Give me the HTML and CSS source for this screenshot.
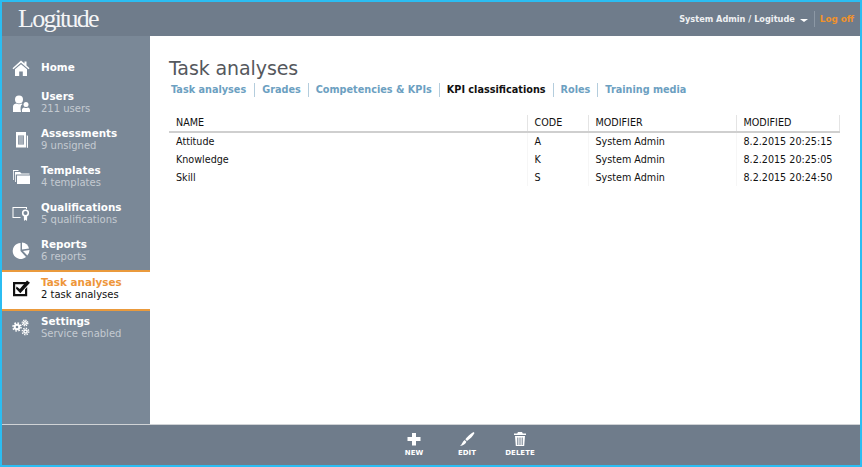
FILE: index.html
```html
<!DOCTYPE html>
<html lang="en">
<head>
<meta charset="utf-8">
<title>Task analyses - Logitude</title>
<link rel="stylesheet" href="styles.css">
</head>
<body>
<div class="app">
  <header class="topbar">
    <div class="logo">Logitude</div>
    <div class="user">
      <span class="user-name">System Admin / Logitude</span>
      <span class="caret"></span>
      <span class="logoff">Log off</span>
    </div>
  </header>
  <div class="middle">
    <nav class="sidebar">
      <a class="nav-item nav-home">
        <svg class="nav-icon" viewBox="0 0 20 20"><path d="M10 2.500 L13.500 5.600 V3.500 H15.500 V7.400 L18.500 10.200 L17.600 11.200 L10 4.700 L2.400 11.200 L1.500 10.200 Z M4 11.300 L10 6.200 L16 11.300 V18 H11.800 V13.500 H8.200 V18 H4 Z" fill="#fff"/></svg>
        <span class="nav-text"><b>Home</b></span>
      </a>
      <a class="nav-item">
        <svg class="nav-icon" viewBox="0 -2 20 20"><circle cx="8" cy="5.500" r="4" fill="#fff"/><path d="M2 18 V12.500 C2 10.500 4 9.800 5.500 9.500 C7 10.500 9 10.500 10.500 9.500 L11.500 10 C9.500 11.500 9 14 10 18 Z" fill="#fff"/><circle cx="15" cy="10.500" r="2.500" fill="#fff"/><path d="M11 18 C10.500 15 11.500 14 13 13.500 C14.300 14.300 15.700 14.300 17 13.500 C18.500 14 19.300 15 19 18 Z" fill="#fff"/></svg>
        <span class="nav-text"><b>Users</b><small>211 users</small></span>
      </a>
      <a class="nav-item">
        <svg class="nav-icon" viewBox="0 0 20 20"><path d="M5 3 H15 V18.500 H5 Z M7 6.500 V15.500 H13 V6.500 Z" fill="#fff" fill-rule="evenodd"/><path d="M7.500 7 H12.500 V15 H7.500 Z" fill="#fff" opacity=".35"/><path d="M15.800 6 L17 7 V19 L15.800 18.500 Z" fill="#fff"/></svg>
        <span class="nav-text"><b>Assessments</b><small>9 unsigned</small></span>
      </a>
      <a class="nav-item">
        <svg class="nav-icon" viewBox="0 0 20 20"><path d="M2 4 H7.500 V5 H2.800 V14 H2 Z" fill="#fff"/><path d="M4 6 H9 L10.500 7.500 H18.500 V8.500 H4.800 V16 H4 Z" fill="#fff"/><path d="M6 9.500 H19 V18 H6 Z" fill="#fff"/></svg>
        <span class="nav-text"><b>Templates</b><small>4 templates</small></span>
      </a>
      <a class="nav-item">
        <svg class="nav-icon" viewBox="0 1 20 20"><path d="M1.500 5 H16 V7 H15 V6 H2.500 V15 H9.500 V16 H1.500 Z" fill="#fff"/><circle cx="14.500" cy="11" r="2.800" fill="none" stroke="#fff" stroke-width="1.600"/><path d="M12.800 14 L13 19 L14.500 17.800 L16 19 L16.200 14 Z" fill="#fff"/></svg>
        <span class="nav-text"><b>Qualifications</b><small>5 qualifications</small></span>
      </a>
      <a class="nav-item">
        <svg class="nav-icon" viewBox="0 0 20 20"><path d="M9.500 3 V11 L15 17 A8 8 0 1 1 9.500 3 Z" fill="#fff"/><path d="M11 2.500 A8 8 0 0 1 18 8.500 L11 9.500 Z" fill="#fff"/><path d="M12 11 L18.500 10 A8 8 0 0 1 16.300 15.500 Z" fill="#fff"/></svg>
        <span class="nav-text"><b>Reports</b><small>6 reports</small></span>
      </a>
      <a class="nav-item nav-active">
        <svg class="nav-icon" viewBox="0 0 20 20"><path d="M2 4 H16 L14 6.200 H4.200 V16 H14 V11.500 L16.200 9 V18.200 H2 Z" fill="#111"/><path d="M5.500 8.500 L8.800 11 L16 2.500 L19 4.800 L9.300 15.200 L5 10.800 Z" fill="#111"/></svg>
        <span class="nav-text"><b>Task analyses</b><small>2 task analyses</small></span>
      </a>
      <a class="nav-item nav-settings">
        <svg class="nav-icon" viewBox="0 0 20 20"><g fill="none" stroke="#fff"><circle cx="6" cy="10" r="2.300" stroke-width="2"/><circle cx="6" cy="10" r="4" stroke-width="1.600" stroke-dasharray="1.600 1.540"/><circle cx="14" cy="6" r="1.400" stroke-width="1.400"/><circle cx="14" cy="6" r="2.800" stroke-width="1.400" stroke-dasharray="1.300 .9"/><circle cx="14.500" cy="14.500" r="1.600" stroke-width="1.500"/><circle cx="14.500" cy="14.500" r="3.200" stroke-width="1.500" stroke-dasharray="1.300 1.200"/></g></svg>
        <span class="nav-text"><b>Settings</b><small>Service enabled</small></span>
      </a>
    </nav>
    <main class="content">
      <h1 class="title">Task analyses</h1>
      <div class="tabs">
        <a class="tab">Task analyses</a>
        <a class="tab">Grades</a>
        <a class="tab">Competencies &amp; KPIs</a>
        <a class="tab tab-current">KPI classifications</a>
        <a class="tab">Roles</a>
        <a class="tab">Training media</a>
      </div>
      <table class="grid">
        <thead>
          <tr><th class="c1">NAME</th><th class="c2">CODE</th><th class="c3">MODIFIER</th><th class="c4">MODIFIED</th></tr>
        </thead>
        <tbody>
          <tr><td>Attitude</td><td>A</td><td>System Admin</td><td>8.2.2015 20:25:15</td></tr>
          <tr><td>Knowledge</td><td>K</td><td>System Admin</td><td>8.2.2015 20:25:05</td></tr>
          <tr><td>Skill</td><td>S</td><td>System Admin</td><td>8.2.2015 20:24:50</td></tr>
        </tbody>
      </table>
    </main>
  </div>
  <footer class="toolbar">
    <a class="tool">
      <svg class="tool-icon" viewBox="0 0 16 16"><path d="M6 2 H10 V6 H14.500 V10 H10 V14.500 H6 V10 H1.500 V6 H6 Z" fill="#fff"/></svg>
      <span>NEW</span>
    </a>
    <a class="tool">
      <svg class="tool-icon" viewBox="0 0 16 16"><path d="M14.500 1 L15.500 2 C14 5 11 8 8 10 L6.300 8.300 C8.500 5.500 11.500 2.500 14.500 1 Z M5.700 9 L7.400 10.700 C6.800 13 4 14.500 1 15 C3 13.500 3.500 10.500 5.700 9 Z" fill="#fff"/></svg>
      <span>EDIT</span>
    </a>
    <a class="tool">
      <svg class="tool-icon" viewBox="0 0 16 16"><path d="M6 1 H10 L10.800 2.500 H14 V4 H2 V2.500 H5.200 Z" fill="#fff"/><path d="M3 5 H13 L12.200 15 H3.800 Z M5.300 6.500 V14 H6.300 V6.500 Z M7.500 6.500 V14 H8.500 V6.500 Z M9.700 6.500 V14 H10.700 V6.500 Z" fill="#fff" fill-rule="evenodd"/></svg>
      <span>DELETE</span>
    </a>
  </footer>
</div>
</body>
</html>
```
FILE: styles.css
```css
* { box-sizing: border-box; }
html, body { margin: 0; padding: 0; height: 100%; }
body { font-family: "DejaVu Sans", "Liberation Sans", sans-serif; background: #fff; }
.app { width: 862px; height: 467px; border: 2px solid #2bbdf2; display: flex; flex-direction: column; overflow: hidden; }

.topbar { height: 34px; flex: none; background: #6f7c8b; display: flex; align-items: center; justify-content: space-between; color: #fff; }
.logo { font-family: "Liberation Serif", serif; font-size: 26px; letter-spacing: -1.750px; margin-left: 16px; margin-top: -1px; color: #f4f5f6; }
.user { display: flex; align-items: center; margin-right: 6px; font-size: 8.200px; font-weight: bold; }
.user-name { color: #eef0f2; }
.caret { width: 0; height: 0; border-left: 4px solid transparent; border-right: 4px solid transparent; border-top: 3px solid #fff; margin: 3px 6px 0 5px; }
.logoff { color: #f0922c; font-size: 8.800px; border-left: 1px solid #8c98a5; padding: 3px 0 3px 5px; }

.middle { flex: 1; display: flex; min-height: 0; }
.sidebar { width: 148px; flex: none; background: #7a8897; padding-top: 20px; display: flex; flex-direction: column; }
.nav-item { display: flex; height: 37px; padding: 5px 0 0 9px; color: #fff; }
.nav-home { height: 29px; }
.nav-icon { width: 20px; height: 20px; flex: none; margin-top: 2px; }
.nav-home .nav-icon { margin-top: -3px; }
.nav-text { margin-left: 10px; display: flex; flex-direction: column; }
.nav-text b { font-size: 10.400px; line-height: 13px; color: #fff; }
.nav-text small { font-size: 10px; line-height: 12px; color: #c4cad1; }
.nav-active { height: 41px; background: #fff; border-top: 2px solid #ea9a3c; border-bottom: 2px solid #ea9a3c; padding-top: 4px; }
.nav-active b { color: #ee9639; }
.nav-active small { color: #111; }
.nav-settings { padding-top: 4px; }

.content { flex: 1; background: #fff; padding: 19px 20px 0 19px; min-width: 0; }
.title { margin: 0; font-weight: normal; font-size: 19px; letter-spacing: -.1px; line-height: 26px; color: #55585d; }
.tabs { display: flex; margin-top: 1px; height: 15px; align-items: center; }
.tab { font-size: 9.700px; font-weight: bold; color: #6ca0c1; padding: 0 7px; border-left: 1px solid #b4cddd; line-height: 14px; white-space: nowrap; }
.tab:first-child { border-left: 0; padding: 0 8px 0 2px; }
.tab-current { color: #111; }

.grid { width: 670px; margin-top: 18px; border-collapse: collapse; table-layout: fixed; font-size: 9.600px; color: #111; }
.grid th { height: 17px; padding: 0 0 2px 7px; text-align: left; font-weight: normal; border-bottom: 2px solid #cfcfcf; border-left: 1px solid #e4e4e4; border-right: 1px solid #e4e4e4; }
.grid th.c1 { border-left: 0; }
.c1 { width: 358px; }
.c2 { width: 61px; }
.c3 { width: 148px; }
.c4 { width: 103px; }
.grid td { height: 18px; padding: 0 0 0 7px; border-left: 1px solid #f6f6f6; white-space: nowrap; }
.grid td:first-child { border-left: 0; }

.toolbar { height: 41px; flex: none; background: #6f7c8b; border-top: 1px solid #d0d3d6; display: flex; justify-content: center; padding-left: 72px; }
.tool { width: 53px; display: flex; flex-direction: column; align-items: center; color: #fff; font-size: 7px; font-weight: bold; padding-top: 6px; }
.tool-icon { width: 16px; height: 16px; margin-bottom: 2px; }
```
